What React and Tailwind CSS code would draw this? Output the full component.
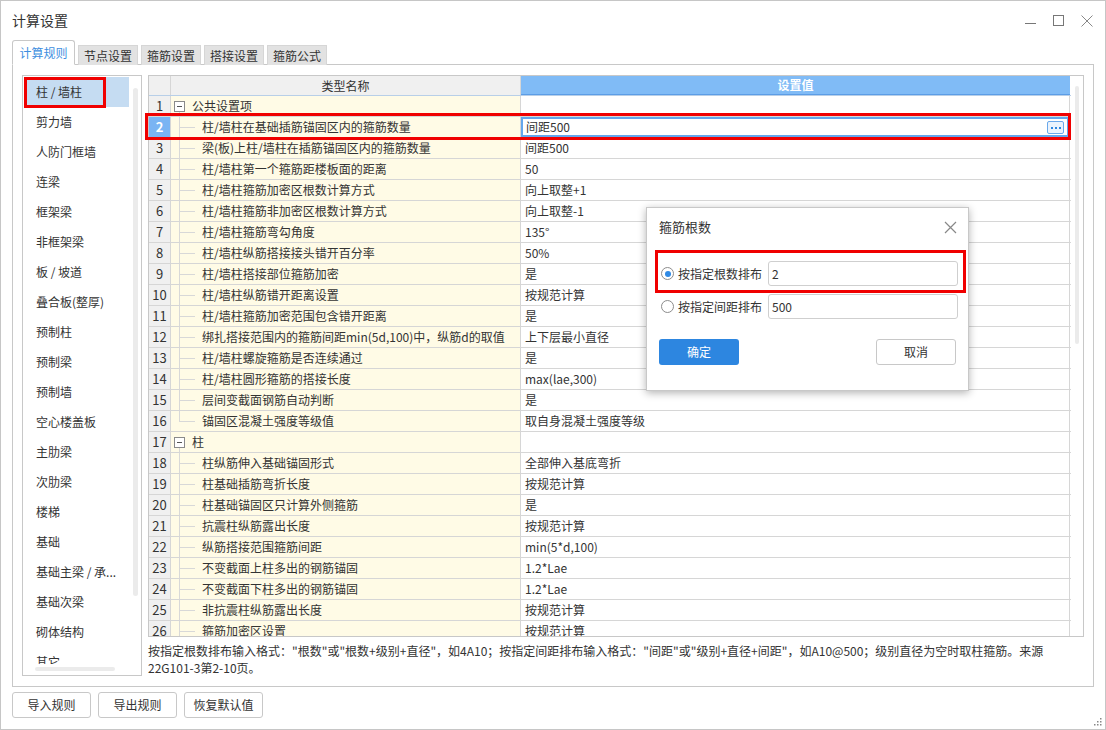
import React from "react";

const FONT = { fontFamily: "'Noto Sans CJK SC', 'Noto Sans', sans-serif" };

const rows = [
  { n: 1, g: true, name: "公共设置项", v: "" },
  { n: 2, name: "柱/墙柱在基础插筋锚固区内的箍筋数量", v: "间距500", sel: true },
  { n: 3, name: "梁(板)上柱/墙柱在插筋锚固区内的箍筋数量", v: "间距500" },
  { n: 4, name: "柱/墙柱第一个箍筋距楼板面的距离", v: "50" },
  { n: 5, name: "柱/墙柱箍筋加密区根数计算方式", v: "向上取整+1" },
  { n: 6, name: "柱/墙柱箍筋非加密区根数计算方式", v: "向上取整-1" },
  { n: 7, name: "柱/墙柱箍筋弯勾角度", v: "135°" },
  { n: 8, name: "柱/墙柱纵筋搭接接头错开百分率", v: "50%" },
  { n: 9, name: "柱/墙柱搭接部位箍筋加密", v: "是" },
  { n: 10, name: "柱/墙柱纵筋错开距离设置", v: "按规范计算" },
  { n: 11, name: "柱/墙柱箍筋加密范围包含错开距离", v: "是" },
  { n: 12, name: "绑扎搭接范围内的箍筋间距min(5d,100)中，纵筋d的取值", v: "上下层最小直径" },
  { n: 13, name: "柱/墙柱螺旋箍筋是否连续通过", v: "是" },
  { n: 14, name: "柱/墙柱圆形箍筋的搭接长度", v: "max(lae,300)" },
  { n: 15, name: "层间变截面钢筋自动判断", v: "是" },
  { n: 16, name: "锚固区混凝土强度等级值", v: "取自身混凝土强度等级", last: true },
  { n: 17, g: true, name: "柱", v: "" },
  { n: 18, name: "柱纵筋伸入基础锚固形式", v: "全部伸入基底弯折" },
  { n: 19, name: "柱基础插筋弯折长度", v: "按规范计算" },
  { n: 20, name: "柱基础锚固区只计算外侧箍筋", v: "是" },
  { n: 21, name: "抗震柱纵筋露出长度", v: "按规范计算" },
  { n: 22, name: "纵筋搭接范围箍筋间距", v: "min(5*d,100)" },
  { n: 23, name: "不变截面上柱多出的钢筋锚固", v: "1.2*Lae" },
  { n: 24, name: "不变截面下柱多出的钢筋锚固", v: "1.2*Lae" },
  { n: 25, name: "非抗震柱纵筋露出长度", v: "按规范计算" },
  { n: 26, name: "箍筋加密区设置", v: "按规范计算" },
];

const leftItems = [
  "柱 / 墙柱", "剪力墙", "人防门框墙", "连梁", "框架梁", "非框架梁", "板 / 坡道", "叠合板(整厚)",
  "预制柱", "预制梁", "预制墙", "空心楼盖板", "主肋梁", "次肋梁", "楼梯", "基础", "基础主梁 / 承...",
  "基础次梁", "砌体结构", "其它",
];

function Row({ r }) {
  return (
    <div className="flex h-[21px] border-b border-[#d6d6d6] shrink-0">
      <div
        className={
          "w-[22px] shrink-0 border-r border-[#d6d6d6] flex items-center justify-center text-[13px] " +
          (r.sel ? "bg-[#7ab4f3] text-white font-bold" : "bg-[#f0f0f0] text-[#333]")
        }
      >
        {r.n}
      </div>
      <div className="w-[350px] shrink-0 border-r border-[#d6d6d6] bg-[#fffbe6] relative flex items-center text-[12px] text-[#333]">
        {r.g ? (
          <>
            <div className="absolute left-[3px] top-[5px] w-[11px] h-[11px] border border-[#8a8a8a] bg-white flex items-center justify-center">
              <div className="w-[5px] h-px bg-[#555]" />
            </div>
            <div className="absolute left-[8px] top-[16px] bottom-0 w-px bg-[#d8d8d8]" />
            <span className="absolute left-[21px] whitespace-nowrap">{r.name}</span>
          </>
        ) : (
          <>
            <div className={"absolute left-[8px] top-0 w-px bg-[#d8d8d8] " + (r.last ? "h-[10px]" : "bottom-0")} />
            <div className="absolute left-[8px] top-[10px] w-[16px] h-px bg-[#d8d8d8]" />
            <span className="absolute left-[31px] whitespace-nowrap">{r.name}</span>
          </>
        )}
      </div>
      <div className="w-[549px] shrink-0 border-r border-[#d6d6d6] bg-white relative flex items-center text-[12px] text-[#333]">
        {r.sel ? (
          <div className="absolute inset-0 border-2 border-[#64a6ec] flex items-center pl-[3px]">
            <span>{r.v}</span>
            <div className="absolute right-[3px] top-[2px] w-[17px] h-[13px] border border-[#6aa8ea] rounded-[2px] bg-[#eaf3fd] flex items-center justify-center gap-[2px]">
              <div className="w-[2px] h-[2px] bg-[#2e86de]" />
              <div className="w-[2px] h-[2px] bg-[#2e86de]" />
              <div className="w-[2px] h-[2px] bg-[#2e86de]" />
            </div>
          </div>
        ) : (
          <span className="pl-[4px] whitespace-nowrap">{r.v}</span>
        )}
      </div>
    </div>
  );
}

export default function App() {
  return (
    <div style={FONT} className="w-[1106px] h-[730px] bg-white border border-[#c6c6c6] flex flex-col relative overflow-hidden text-[#333]">
      {/* Title bar */}
      <div className="h-[39px] shrink-0 flex items-center justify-between pl-[11px] pr-[12px]">
        <span className="text-[14px] text-[#333]">计算设置</span>
        <div className="flex items-center gap-[17px]">
          <svg width="11" height="11" viewBox="0 0 11 11">
            <line x1="0" y1="8.5" x2="11" y2="8.5" stroke="#777" strokeWidth="1" />
          </svg>
          <svg width="11" height="11" viewBox="0 0 11 11">
            <rect x="0.5" y="0.5" width="10" height="10" fill="none" stroke="#777" strokeWidth="1" />
          </svg>
          <svg width="12" height="12" viewBox="0 0 12 12">
            <path d="M0.5 0.5 L11.5 11.5 M11.5 0.5 L0.5 11.5" stroke="#888" strokeWidth="1" />
          </svg>
        </div>
      </div>

      {/* Tabs */}
      <div className="h-[25px] shrink-0 flex items-end pl-[11px] gap-[3px] relative z-10">
        <div className="h-[25px] w-[63px] bg-white border border-[#c8c8c8] border-b-white rounded-t-[3px] flex items-center justify-center text-[12px] text-[#3d8ee0]">
          计算规则
        </div>
        {["节点设置", "箍筋设置", "搭接设置", "箍筋公式"].map((t) => (
          <div key={t} className="h-[20px] w-[60px] bg-[#e2e2e2] border border-[#d6d6d6] border-b-0 flex items-center justify-center text-[12px] text-[#333]">
            {t}
          </div>
        ))}
      </div>

      {/* Content panel */}
      <div className="mx-[11px] -mt-px h-[623px] shrink-0 border border-[#c8c8c8] flex pl-[9px] pt-[10px] gap-[6px]">
        {/* left list */}
        <div className="w-[120px] h-[601px] border border-[#c8c8c8] relative overflow-hidden shrink-0">
          <div className="h-[588px] overflow-hidden pt-[1px] pl-[3px]">
            {leftItems.map((t, i) => (
              <div
                key={t}
                className={
                  "h-[30px] w-[103px] flex items-center pl-[10px] text-[12px] whitespace-nowrap " +
                  (i === 0 ? "bg-[#c5dcf2]" : "")
                }
              >
                {t}
              </div>
            ))}
          </div>
          <div className="absolute left-[110px] top-[12px] w-[5px] h-[508px] rounded bg-[#ebebeb]" />
          <div className="absolute left-[12px] top-[591px] w-[80px] h-[4px] rounded bg-[#ebebeb]" />
          <div className="absolute left-[1px] top-[1px] w-[82px] h-[31px] border-[3px] border-[#f00000]" />
        </div>

        {/* right column */}
        <div className="w-[936px] flex flex-col relative">
          <div className="h-[562px] border border-[#c8c8c8] flex overflow-hidden">
            <div className="flex flex-col w-[922px] shrink-0">
              <div className="flex h-[20px] border-b border-[#b8cfe8] shrink-0">
                <div className="w-[22px] bg-[#f0f0f0] border-r border-[#d6d6d6]" />
                <div className="w-[350px] bg-[#f0f0f0] border-r border-[#d6d6d6] flex items-center justify-center text-[12px]">
                  类型名称
                </div>
                <div className="w-[549px] bg-[#80bbf6] border-b border-[#5c9de6] flex items-center justify-center text-[12px] text-white font-bold">
                  设置值
                </div>
              </div>
              {rows.map((r) => (
                <Row key={r.n} r={r} />
              ))}
            </div>
            <div className="flex-1 relative bg-white">
              <div className="absolute left-[4px] top-[10px] w-[4px] h-[258px] rounded bg-[#ebebeb]" />
            </div>
          </div>
          <div className="absolute left-[-3px] top-[38px] w-[926px] h-[27px] border-[3px] border-[#f00000] pointer-events-none" />
          <div className="mt-[5px] text-[12px] leading-[17px] text-[#333] pr-[20px]">
            按指定根数排布输入格式："根数"或"根数+级别+直径"，如4A10；按指定间距排布输入格式："间距"或"级别+直径+间距"，如A10@500；级别直径为空时取柱箍筋。来源22G101-3第2-10页。
          </div>
        </div>
      </div>

      {/* bottom buttons */}
      <div className="flex gap-[7px] pl-[11px] mt-[5px]">
        {["导入规则", "导出规则", "恢复默认值"].map((t) => (
          <div key={t} className="w-[79px] h-[26px] border border-[#c8c8c8] rounded-[3px] flex items-center justify-center text-[12px] bg-white">
            {t}
          </div>
        ))}
      </div>

      {/* resize grip */}
      <svg className="absolute right-[3px] bottom-[3px]" width="8" height="8" viewBox="0 0 8 8">
        <rect x="6" y="0" width="1.5" height="1.5" fill="#888" />
        <rect x="3" y="3" width="1.5" height="1.5" fill="#888" />
        <rect x="6" y="3" width="1.5" height="1.5" fill="#888" />
        <rect x="0" y="6" width="1.5" height="1.5" fill="#888" />
        <rect x="3" y="6" width="1.5" height="1.5" fill="#888" />
        <rect x="6" y="6" width="1.5" height="1.5" fill="#888" />
      </svg>

      {/* Dialog */}
      <div className="absolute left-[645px] top-[206px] w-[323px] h-[184px] bg-white border border-[#c8c8c8] shadow-[0_2px_8px_rgba(0,0,0,0.3)] flex flex-col">
        <div className="h-[38px] flex items-center justify-between pl-[12px] pr-[11px]">
          <span className="text-[13px] text-[#333]">箍筋根数</span>
          <svg width="13" height="13" viewBox="0 0 13 13">
            <path d="M1 1 L12 12 M12 1 L1 12" stroke="#888" strokeWidth="1.2" />
          </svg>
        </div>
        <div className="flex items-center h-[25px] mt-[15px]">
          <div className="ml-[14px] w-[13px] h-[13px] rounded-full border border-[#8c8c8c] flex items-center justify-center bg-white">
            <div className="w-[6px] h-[6px] rounded-full bg-[#2f8ae5]" />
          </div>
          <span className="ml-[4px] text-[12px] w-[90px]">按指定根数排布</span>
          <div className="w-[190px] h-[25px] border border-[#cfcfcf] rounded-[3px] flex items-center pl-[3px] text-[12px]">2</div>
        </div>
        <div className="flex items-center h-[25px] mt-[8px]">
          <div className="ml-[14px] w-[13px] h-[13px] rounded-full border border-[#8c8c8c] bg-white" />
          <span className="ml-[4px] text-[12px] w-[90px]">按指定间距排布</span>
          <div className="w-[190px] h-[25px] border border-[#cfcfcf] rounded-[3px] flex items-center pl-[3px] text-[12px]">500</div>
        </div>
        <div className="flex justify-between mt-[20px] px-[12px]">
          <div className="w-[80px] h-[26px] rounded-[3px] bg-[#2d86e0] text-white text-[12px] flex items-center justify-center">确定</div>
          <div className="w-[80px] h-[26px] rounded-[3px] border border-[#c8c8c8] text-[12px] flex items-center justify-center">取消</div>
        </div>
        <div className="absolute left-[8px] top-[42px] w-[311px] h-[43px] border-[3px] border-[#f00000]" />
      </div>
    </div>
  );
}
